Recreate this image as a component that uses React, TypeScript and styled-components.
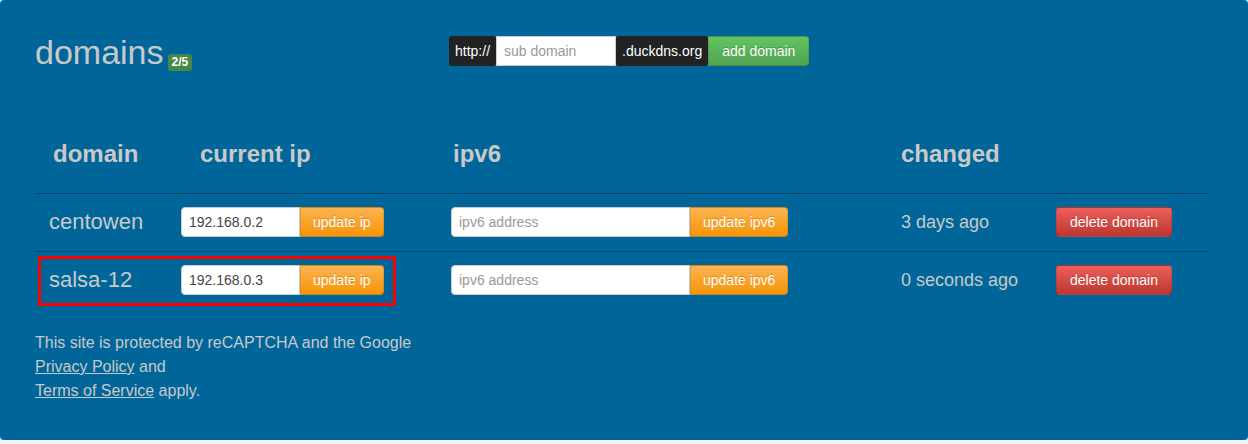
import React from "react";
import styled, { createGlobalStyle } from "styled-components";

const GlobalStyle = createGlobalStyle`
  body {
    margin: 0;
    background: #f3f3f3;
    font-family: "Liberation Sans", Arial, sans-serif;
  }
  * {
    box-sizing: border-box;
  }
`;

const Panel = styled.main`
  background-color: #006699;
  height: 440px;
  border-radius: 4px;
  padding: 32px 38px 0 35px;
  color: #c9c9c9;
`;

const TopBar = styled.div`
  display: flex;
  align-items: flex-start;
  height: 40px;
`;

const Title = styled.h1`
  margin: 0;
  width: 414px;
  font-size: 34px;
  font-weight: normal;
  line-height: 40px;
`;

const Badge = styled.span`
  display: inline-block;
  margin-left: 4px;
  padding: 3px 4px;
  font-size: 12px;
  line-height: 11px;
  font-weight: bold;
  color: #fff;
  background-color: #468847;
  border-radius: 3px;
  vertical-align: -2px;
`;

const AddForm = styled.form`
  display: flex;
  height: 30px;
  margin-top: 4px;
`;

const Addon = styled.span`
  display: flex;
  align-items: center;
  padding: 0 6px;
  font-size: 14px;
  color: #fff;
  background-color: #222;
  border-radius: 3px;
`;

const TextInput = styled.input<{ $width: number; $rounded?: boolean }>`
  width: ${({ $width }) => $width}px;
  height: 30px;
  padding: 0 7px;
  font-family: inherit;
  font-size: 14px;
  color: #444;
  background: #fff;
  border: 1px solid #ccc;
  border-radius: ${({ $rounded }) => ($rounded ? "4px 0 0 4px" : "0")};
  outline: none;
  &::placeholder {
    color: #999;
  }
`;

const gradients = {
  success: ["#62c462", "#51a351"],
  warning: ["#fbb450", "#f89406"],
  danger: ["#ee5f5b", "#bd362f"],
};

type Tone = keyof typeof gradients;

const Button = styled.button<{ $tone: Tone; $joined?: boolean }>`
  height: 30px;
  padding: 0 ${({ $tone }) => ($tone === "warning" ? 12 : 13)}px;
  font-family: inherit;
  font-size: 14px;
  color: #fff;
  text-shadow: 0 -1px 0 rgba(0, 0, 0, 0.2);
  background-image: linear-gradient(
    ${({ $tone }) => gradients[$tone][0]},
    ${({ $tone }) => gradients[$tone][1]}
  );
  border: 1px solid rgba(0, 0, 0, 0.1);
  border-bottom-color: rgba(0, 0, 0, 0.25);
  border-radius: ${({ $joined }) => ($joined ? "0 4px 4px 0" : "4px")};
  cursor: pointer;
`;

const Table = styled.section`
  width: 1174px;
  padding-top: 67px;
`;

const Row = styled.div<{ $head?: boolean }>`
  position: relative;
  display: grid;
  grid-template-columns: 146px 270px 450px 155px 153px;
  align-items: center;
  height: ${({ $head }) => ($head ? "auto" : "58px")};
  padding-bottom: ${({ $head }) => ($head ? "0" : "1px")};
  border-top: ${({ $head }) => ($head ? "none" : "1px solid #02466c")};
`;

const HeadCell = styled.div<{ $indent: number }>`
  padding-left: ${({ $indent }) => $indent}px;
  padding-bottom: 24px;
  font-size: 24px;
  font-weight: bold;
  line-height: 30px;
`;

const DomainName = styled.div`
  padding-left: 14px;
  font-size: 22px;
`;

const Changed = styled.div`
  font-size: 18px;
`;

const InputGroup = styled.div`
  display: flex;
`;

const Highlight = styled.div`
  position: absolute;
  left: 3px;
  top: 4px;
  width: 358px;
  height: 50px;
  border: 3px solid #ff0000;
  pointer-events: none;
`;

const Footer = styled.p`
  margin: 22px 0 0;
  font-size: 16px;
  line-height: 24px;
`;

const FooterLink = styled.a`
  color: inherit;
  text-decoration: underline;
`;

type Domain = { name: string; ip: string; changed: string; marked?: boolean };

const domains: Domain[] = [
  { name: "centowen", ip: "192.168.0.2", changed: "3 days ago" },
  { name: "salsa-12", ip: "192.168.0.3", changed: "0 seconds ago", marked: true },
];

export default function App() {
  return (
    <>
      <GlobalStyle />
      <Panel>
        <TopBar>
          <Title>
            domains<Badge>2/5</Badge>
          </Title>
          <AddForm onSubmit={(e) => e.preventDefault()}>
            <Addon>http://</Addon>
            <TextInput $width={120} placeholder="sub domain" />
            <Addon>.duckdns.org</Addon>
            <Button $tone="success" $joined type="submit">
              add domain
            </Button>
          </AddForm>
        </TopBar>

        <Table>
          <Row $head>
            <HeadCell $indent={18}>domain</HeadCell>
            <HeadCell $indent={19}>current ip</HeadCell>
            <HeadCell $indent={2}>ipv6</HeadCell>
            <HeadCell $indent={0}>changed</HeadCell>
            <HeadCell $indent={0} />
          </Row>
          {domains.map((d) => (
            <Row key={d.name}>
              <DomainName>{d.name}</DomainName>
              <InputGroup>
                <TextInput $width={119} $rounded defaultValue={d.ip} />
                <Button $tone="warning" $joined>
                  update ip
                </Button>
              </InputGroup>
              <InputGroup>
                <TextInput $width={239} $rounded placeholder="ipv6 address" />
                <Button $tone="warning" $joined>
                  update ipv6
                </Button>
              </InputGroup>
              <Changed>{d.changed}</Changed>
              <div>
                <Button $tone="danger">delete domain</Button>
              </div>
              {d.marked ? <Highlight /> : null}
            </Row>
          ))}
        </Table>

        <Footer>
          This site is protected by reCAPTCHA and the Google
          <br />
          <FooterLink href="#">Privacy Policy</FooterLink> and
          <br />
          <FooterLink href="#">Terms of Service</FooterLink> apply.
        </Footer>
      </Panel>
    </>
  );
}
